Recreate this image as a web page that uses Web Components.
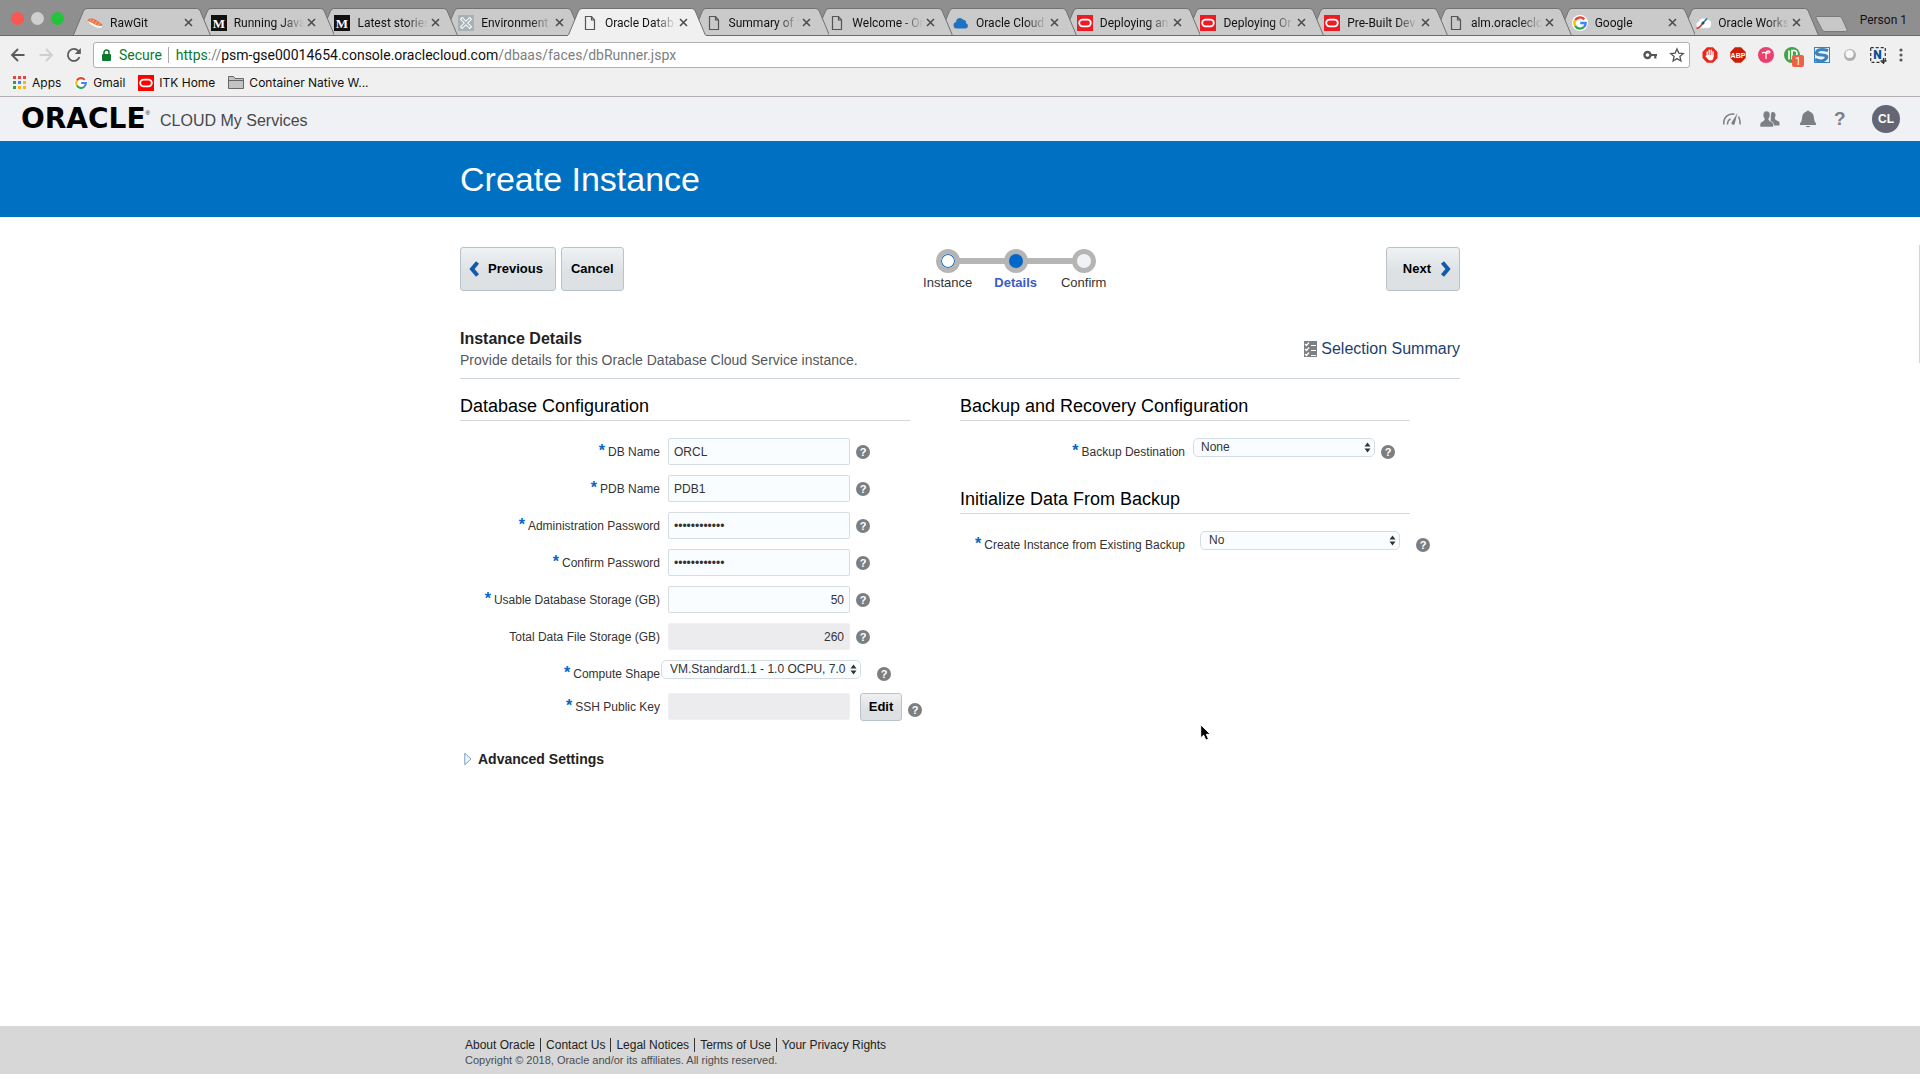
<!DOCTYPE html>
<html lang="en">
<head>
<meta charset="utf-8">
<title>Oracle Database Cloud Service</title>
<style>
  html, body { margin: 0; height: 100%; }
  body { background: #fff; font: 12px/16px "Liberation Sans", Arial, sans-serif; color: #333; }
</style>
</head>
<body>
<cloud-app></cloud-app>
<script>
const define = (name, render) => customElements.define(name, class extends HTMLElement {
  connectedCallback() {
    if (this.shadowRoot) return;
    const t = document.createElement('template');
    t.innerHTML = render(this);
    this.attachShadow({ mode: 'open' }).append(t.content.cloneNode(true));
  }
});
const svg = (w, h, body) => `<svg width="${w}" height="${h}" viewBox="0 0 ${w} ${h}" aria-hidden="true">${body}</svg>`;

const oracleMark = bg => svg(16, 16, `<rect width="16" height="16" fill="${bg}"/><rect x="2.2" y="4.7" width="11.6" height="6.6" rx="3.3" fill="none" stroke="#fff" stroke-width="1.8"/>`);
const googleMark = svg(16, 16, `<circle cx="8" cy="8" r="8" fill="#fff"/><g fill="none" stroke-width="2.4"><path d="M12.3 4.4A5.6 5.6 0 0 0 3.2 5.2" stroke="#ea4335"/><path d="M3.2 5.2a5.6 5.6 0 0 0 0 5.6" stroke="#fbbc05"/><path d="M3.2 10.8a5.6 5.6 0 0 0 8.6 1.4" stroke="#34a853"/><path d="M11.8 12.2A5.6 5.6 0 0 0 13.6 8H8.2" stroke="#4285f4"/></g>`);
const icons = {
  sushi: svg(16, 16, '<path d="M1 6.500l3 3 6 3.300 4.500-.3.6-1.800-5-2z" fill="#fff"/><path d="M.3 5.500C2 2.800 6 3 9.500 5.300c2.600 1.600 5 3.200 6.300 5.300-2.800.9-5.600.2-8.300-1.300C5 7.900 2.500 6.300.3 5.500z" fill="#f2703d"/><path d="M4 4.500l-1 1.800M7 4.800L5.500 7.500M10 6.500L8.300 9M12.500 8.200l-1.300 2" stroke="#ffc3a3" stroke-width=".8"/>'),
  medium: svg(16, 16, '<rect width="16" height="16" fill="#111"/><text x="8" y="12.500" text-anchor="middle" font-family="Liberation Serif, serif" font-weight="700" font-size="13" fill="#fff">M</text>'),
  env: svg(16, 16, '<rect width="16" height="16" fill="#a7b0b5"/><path d="M3 3l10 10M13 3L3 13" stroke="#fff" stroke-width="3.400"/><path d="M3.800 3.800l8.400 8.400M12.200 3.800l-8.400 8.400" stroke="#a7b0b5" stroke-width="1.600"/>'),
  page: svg(16, 16, '<path d="M3.500 1.500h6l3 3.500v9.500h-9z" fill="none" stroke="#555" stroke-width="1.200"/><path d="M9.500 1.500V5h3" fill="none" stroke="#555" stroke-width="1.200"/>'),
  cloud: svg(16, 16, '<path d="M3.500 13.500a3.300 3.300 0 0 1-.4-6.500 3.800 3.800 0 0 1 7-2.200 3.300 3.300 0 0 1 3 3.500 2.700 2.700 0 0 1-.3 5.200z" fill="#1f72bf"/>'),
  red: oracleMark('#ed1c24'),
  google: googleMark,
  work: svg(16, 16, '<path d="M4 13a3.200 3.200 0 0 1 0-6.300A4.300 4.300 0 0 1 11.500 5 3.800 3.800 0 0 1 13.500 13z" fill="#fff" stroke="#d8e2ea" stroke-width=".6"/><path d="M1.500 13.500C4.500 13 6 11 7.500 8.500" fill="none" stroke="#d93a30" stroke-width="1.500"/><path d="M7 9l5-5.500" stroke="#2d6fa8" stroke-width="1.500"/><circle cx="8" cy="8" r="1.500" fill="#1d4f80"/>')
};

define('browser-tab', el => `
<style>
  :host { position: relative; flex: 1 1 0; min-width: 0; height: 28px; display: flex; align-items: center; box-sizing: border-box; padding: 1px 18px 0 14px; font: 12px/16px Roboto, sans-serif; color: #111; }
  :host(:not(:first-child)) { margin-left: -14px; }
  :host([active]) { z-index: 30 !important; --tab: #f0f0f0; --base: #f0f0f0; }
  .shape { position: absolute; inset: 0; width: 100%; height: 100%; z-index: -1; }
  svg { flex: none; display: block; }
  .title { flex: 1; min-width: 0; margin: 0 3px 0 7px; overflow: hidden; white-space: nowrap; -webkit-mask-image: linear-gradient(to right, #000 calc(100% - 22px), transparent); mask-image: linear-gradient(to right, #000 calc(100% - 22px), transparent); }
  button { border: 0; background: none; padding: 0; width: 9px; height: 16px; display: grid; place-items: center; }
</style>
<svg class="shape" viewBox="0 0 138 28" preserveAspectRatio="none" aria-hidden="true"><path d="M0 28L10.500 3Q11.500.5 14 .5H124Q126.500.5 127.500 3L138 28" fill="var(--tab, #cacaca)" stroke="#707070"/><path d="M0 27.500H138" stroke="var(--base, #6a6a6a)"/></svg>
${icons[el.getAttribute('icon')]}
<span class="title"><slot></slot></span>
<button aria-label="Close tab">${svg(9, 9, '<path d="M1 1l7 7M8 1L1 8" stroke="#4a4a4a" stroke-width="1.500"/>')}</button>`);

define('tab-strip', () => {
  const tabs = [['sushi', 'RawGit'], ['medium', 'Running Java'], ['medium', 'Latest stories'], ['env', 'Environment'], ['page', 'Oracle Datab'], ['page', 'Summary of t'], ['page', 'Welcome - Or'], ['cloud', 'Oracle Cloud'], ['red', 'Deploying an'], ['red', 'Deploying Or'], ['red', 'Pre-Built Dev'], ['page', 'alm.oracleclo'], ['google', 'Google'], ['work', 'Oracle Works']];
  return `
<style>
  :host { display: flex; align-items: flex-end; height: 36px; background: #8f8f8f; box-shadow: inset 0 -1px #6a6a6a; font: 12px/16px Roboto, sans-serif; color: #111; }
  .lights { width: 73px; height: 36px; flex: none; box-sizing: border-box; padding: 12px 0 0 11px; display: flex; gap: 7px; }
  .lights i { width: 13px; height: 13px; border-radius: 50%; }
  .tabs { flex: 1; min-width: 0; display: flex; isolation: isolate; }
  .end { flex: none; width: 101px; height: 36px; display: flex; align-items: flex-start; box-sizing: border-box; padding-right: 13px; }
  button { border: 0; background: none; padding: 0; height: 36px; margin-left: -4px; flex: none; }
  .who { margin: 12px 0 0 auto; }
  svg { display: block; }
</style>
<div class="lights"><i style="background:#fc5650"></i><i style="background:#cfcfcf"></i><i style="background:#20c53a"></i></div>
<div class="tabs">${tabs.map(([i, t], n) => `<browser-tab icon="${i}" ${n === 4 ? 'active' : ''} style="z-index:${20 - n}">${t}</browser-tab>`).join('')}</div>
<div class="end"><button aria-label="New tab">${svg(34, 36, '<path d="M2 16.500h22q2 0 3 2l5 11q.5 2-1.500 2H10q-2 0-3-2L1 18q-.5-1.500 1-1.500z" fill="#c8c8c8" stroke="#7a7a7a"/>')}</button><span class="who">Person 1</span></div>`;
});

define('address-bar', () => `
<style>
  :host { display: flex; align-items: center; height: 38px; padding: 0 14px 0 10px; background: #f0f0f0; }
  button { border: 0; background: none; padding: 0; display: grid; place-items: center; }
  .nav { display: flex; gap: 12px; width: 83px; flex: none; }
  .nav button { width: 16px; height: 16px; }
  .box { flex: 1; min-width: 0; height: 26px; box-sizing: border-box; border: 1px solid #b1afb1; border-radius: 3px; background: #fff; display: flex; align-items: center; padding: 0 2px 0 8px; font: 14px/20px Roboto, sans-serif; color: #808080; }
  .secure { color: #0b7a2f; padding: 0 6px 0 8px; border-right: 1px solid #aaa; line-height: 16px; margin-right: 7px; }
  .url { flex: 1; white-space: nowrap; } .url b { font-weight: 400; color: #111; } .url i { font-style: normal; color: #0b7a2f; }
  .box button { width: 20px; margin-left: 7px; }
  .ext { display: flex; align-items: center; gap: 8px; margin-left: 10px; }
  .ext button { width: 20px; height: 20px; }
  .ext button:last-child { width: 10px; }
  svg { display: block; overflow: visible; }
</style>
<div class="nav">
  <button aria-label="Back">${svg(16, 16, '<path d="M14.500 8H2M8 2L2 8l6 6" fill="none" stroke="#5a5a5a" stroke-width="1.800"/>')}</button>
  <button aria-label="Forward">${svg(16, 16, '<path d="M1.500 8H14M8 2l6 6-6 6" fill="none" stroke="#cfcfcf" stroke-width="1.800"/>')}</button>
  <button aria-label="Reload">${svg(16, 16, '<path d="M13.500 10A6 6 0 1 1 12.300 3.900L14 5.600" fill="none" stroke="#5a5a5a" stroke-width="1.800"/><path d="M14.800 1v6h-6z" fill="#5a5a5a"/>')}</button>
</div>
<div class="box">${svg(9, 13, '<rect y="5" width="9" height="7" rx="1" fill="#0b7a2f"/><path d="M2 6V3.500a2.500 2.500 0 0 1 5 0V6" fill="none" stroke="#0b7a2f" stroke-width="1.500"/>')}
  <span class="secure">Secure</span><span class="url"><i>https</i>://<b>psm-gse00014654.console.oraclecloud.com</b>/dbaas/faces/dbRunner.jspx</span>
  <button aria-label="Saved password">${svg(15, 10, '<circle cx="4.500" cy="5" r="3" fill="none" stroke="#555" stroke-width="2.400"/><path d="M7.500 5H14M12.300 5v3.500" fill="none" stroke="#555" stroke-width="2.200"/>')}</button>
  <button aria-label="Bookmark this page">${svg(14, 14, '<path d="M7 .9l1.800 4.200 4.500.4-3.400 3 1 4.500L7 10.600 3.100 13l1-4.500-3.400-3 4.500-.4z" fill="none" stroke="#555" stroke-width="1.300"/>')}</button>
</div>
<div class="ext">
  <button aria-label="Content blocker">${svg(16, 16, '<path d="M5 .3h6L15.500 5v6L11 15.700H5L.5 11V5z" fill="#e8281b"/><path d="M5.200 9V5M7.200 8V3.200M9.200 8V3.200M11 9V4.700" stroke="#fff" stroke-width="1.300" stroke-linecap="round"/><path d="M4.600 8h7v2q-.5 3.500-3.200 3.500-2 0-3-2L3.200 9l1-.5z" fill="#fff"/>')}</button>
  <button aria-label="Adblock Plus">${svg(16, 16, '<path d="M5 .3h6L15.700 5v6L11 15.700H5L.3 11V5z" fill="#cc1d06"/><text x="8" y="10.700" text-anchor="middle" font-family="Liberation Sans, sans-serif" font-weight="700" font-size="7" fill="#fff">ABP</text>')}</button>
  <button aria-label="Extension">${svg(16, 16, '<circle cx="8" cy="8" r="8" fill="#ec3f6e"/><path d="M4 6.300q1.800-1.600 4-.3v6M8 6q.5-2 2.300-2t1.500 1.500Q10.600 6.500 8 6z" fill="none" stroke="#fff" stroke-width="1.300"/>')}</button>
  <button aria-label="Privacy extension, 1 alert">${svg(20, 20, '<circle cx="8" cy="10" r="8" fill="#42a34c"/><path d="M5 5.500v9M8 14.500v-9h2a3 3 0 0 1 0 6" fill="none" stroke="#fff" stroke-width="1.600"/><rect x="8" y="10" width="12" height="12" rx="2" fill="#ef6246"/><text x="14" y="19.500" text-anchor="middle" font-family="Roboto, sans-serif" font-size="10" fill="#fff">1</text>')}</button>
  <button aria-label="Script extension">${svg(16, 16, '<rect x=".5" y=".5" width="15" height="15" fill="#eaf3fa" stroke="#3b83be"/><path d="M14 3.500Q5 1 3 4.500T8 8t3.500 4T1 12.500" fill="none" stroke="#3b83be" stroke-width="3.200"/>')}</button>
  <button aria-label="Recorder">${svg(14, 14, '<circle cx="7" cy="7" r="6" fill="#b0b0b0"/><circle cx="6.500" cy="6" r="4" fill="#f7f7f7"/>')}</button>
  <button aria-label="Capture">${svg(16, 16, '<rect x=".7" y=".7" width="14.600" height="14.600" fill="none" stroke="#333" stroke-width="1.200" stroke-dasharray="3 2"/><text x="7.500" y="12.300" text-anchor="middle" font-family="Roboto, sans-serif" font-weight="900" font-size="12" fill="#0a4d9b">N</text><path d="M13.500 11v6M10.500 14h6" stroke="#333" stroke-width="1.300"/>')}</button>
  <button aria-label="Menu">${svg(4, 14, '<g fill="#5a5a5a"><circle cx="2" cy="2" r="1.600"/><circle cx="2" cy="7" r="1.600"/><circle cx="2" cy="12" r="1.600"/></g>')}</button>
</div>`);

define('bookmark-bar', () => {
  const cols = ['#e8453c', '#e8453c', '#e8453c', '#2d9f48', '#3f83f0', '#f5b915', '#2d9f48', '#f5b915', '#f5b915'];
  const grid = cols.map((c, i) => `<rect x="${(i % 3) * 5}" y="${Math.floor(i / 3) * 5}" width="3" height="3" fill="${c}"/>`).join('');
  return `
<style>
  :host { box-sizing: border-box; display: flex; align-items: center; gap: 13px; height: 23px; padding: 0 13px 5px; border-bottom: 1px solid #b1adb1; background: #f0f0f0; }
  a { display: flex; align-items: center; gap: 5px; color: #111; text-decoration: none; font: 12px/16px Inter, sans-serif; }
  svg { display: block; }
</style>
<a href="#apps">${svg(14, 13, grid)}Apps</a>
<a href="#gmail">${googleMark.replace('width="16" height="16"', 'width="14" height="14"')}Gmail</a>
<a href="#itk">${oracleMark('#fe0000')}ITK Home</a>
<a href="#folder">${svg(16, 13, '<path d="M.5 12.500V.5h5l1.500 2h8.500v10z" fill="#c3c3c3" stroke="#666"/><path d="M.5 4.500h15" stroke="#666"/>')}Container Native W...</a>`;
});

define('service-header', () => `
<style>
  :host { display: flex; align-items: center; height: 44px; padding: 0 20px 0 21px; background: #f0f1f4; }
  .logo { width: 139px; font: 700 28px/30px "DejaVu Sans", sans-serif; color: #000; display: flex; }
  .logo small { font: 6px/10px "Liberation Sans", sans-serif; padding-top: 4px; }
  .name { font-size: 16px; line-height: 20px; color: #46484c; padding-top: 3px; }
  nav { margin-left: auto; display: flex; align-items: center; gap: 18px; }
  button { border: 0; padding: 0; background: none; width: 20px; height: 20px; display: grid; place-items: center; }
  .help { width: 10px; margin-left: -2px; font: 700 19px/20px "Liberation Sans", sans-serif; color: #7c7f83; }
  .user { width: 28px; height: 28px; border-radius: 50%; background: #646673; color: #fff; font: 700 12px/28px "Liberation Sans", sans-serif; margin-left: 10px; }
  svg { display: block; }
</style>
<span class="logo">ORACLE<small>®</small></span><span class="name">CLOUD My Services</span>
<nav>
  <button aria-label="Dashboard">${svg(18, 14, '<path d="M1 12.500A8.500 8.500 0 0 1 11.500 2.300M15.500 4.500q1.700 3 1.600 8M4.500 12.500q-.2-4 3-5.700" fill="none" stroke="#7c7f83" stroke-width="1.500"/><path d="M8.500 10.500L14.500 1l-3 11.500q-3.500 1-3-2z" fill="#7c7f83"/>')}</button>
  <button aria-label="Users">${svg(20, 16, '<g fill="#7c7f83"><path d="M11.500 1.200q3.300-1 4 2 .2 2-.8 3.800.3 2 2.500 2.800 2.300.5 2.300 2.200v2.500h-5.500q-.2-2.800-3.600-4 .7-3 .3-5.500z"/><path d="M6.500 0q3.800 0 3.500 4.500-.3 2.300-1.300 3.300 0 1.700 1.300 2.200 3.300 1 3.500 3v3H0v-3q.2-2 3.200-3 1.300-.6 1.200-2.200-1.200-1.300-1.300-3.300Q3 .2 6.500 0z" stroke="#f0f1f4" stroke-width=".6"/></g>')}</button>
  <button aria-label="Notifications">${svg(18, 18, '<path d="M7.500 1.500q1.500-2 3 0 4.500 1.500 4.500 7 0 3 2 5v1.500H1v-1.500q2-2 2-5 0-5.500 4.500-7zM6.500 16h5q-2.500 2.500-5 0z" fill="#7c7f83"/>')}</button>
  <button class="help" aria-label="Help">?</button>
  <button class="user">CL</button>
</nav>`);

const buttonCss = 'button { box-sizing: border-box; border: 1px solid #b9c3cb; border-radius: 3px; background: linear-gradient(#eff1f3, #dde1e4 60%); color: #000; font: 700 13px/16px "Liberation Sans", Arial, sans-serif; }';

define('wizard-button', el => {
  const d = el.getAttribute('arrow');
  const arrow = d ? svg(11, 16, `<path d="${d === 'left' ? 'M8.500 1.500L3 8l5.500 6.500' : 'M2.500 1.500L8 8l-5.500 6.500'}" fill="none" stroke="#125aac" stroke-width="4"/>`) : '';
  return `
<style>
  :host { display: block; } ${buttonCss}
  button { height: 44px; padding: 0 ${d ? 8 : 9}px; display: flex; align-items: center; gap: 8px; }
  ${d === 'left' ? 'button { padding-right: 12px; }' : d ? 'button { padding-left: 16px; gap: 9px; }' : ''}
  svg { display: block; }
</style>
<button>${d === 'left' ? arrow : ''}<slot></slot>${d === 'right' ? arrow : ''}</button>`;
});

define('progress-train', () => `
<style>
  :host { display: block; padding-left: 22px; }
  ol { display: flex; list-style: none; margin: 0; padding: 0; }
  li { width: 68px; display: grid; justify-items: center; font-size: 13px; line-height: 20px; color: #333; background: linear-gradient(#b5b5b5, #b5b5b5) 0 9px / 100% 6px no-repeat; }
  li:first-child { background-size: 50% 6px; background-position: 100% 9px; }
  li:last-child { background-size: 50% 6px; }
  i { box-sizing: border-box; width: 24px; height: 24px; border-radius: 50%; border: 5px solid #b5b5b5; background: #fff; box-shadow: inset 0 0 0 1px #0a66c2; }
  .on i { background: #0067cc; } .on { font-weight: 700; color: #3c5cc4; }
  li:last-child i { background: #eff3f5; box-shadow: none; }
</style>
<ol><li><i></i>Instance</li><li class="on" aria-current="step"><i></i>Details</li><li><i></i>Confirm</li></ol>`);

define('help-icon', () => `
<style>:host { display: block; flex: none; } button { display: block; border: 0; padding: 0; width: 14px; height: 14px; border-radius: 50%; background: #7c7f82; color: #fff; font: 700 11px/14px "Liberation Sans", sans-serif; text-align: center; }</style>
<button aria-label="Help">?</button>`);

define('form-field', el => {
  const a = n => el.getAttribute(n), has = n => el.hasAttribute(n);
  const control = a('type') === 'select'
    ? `<span class="pick"><select id="c"><option>${a('value')}</option></select>${svg(7, 11, '<path d="M.5 4.500L3.500.5l3 4zM.5 6.500l3 4 3-4z" fill="#333"/>')}</span>`
    : `<input id="c" type="${a('type') || 'text'}" value="${a('value') || ''}" ${has('readonly') ? 'readonly' : ''} autocomplete="off">`;
  return `
<style>
  :host { display: flex; align-items: flex-start; height: 27px; } ${buttonCss}
  label { width: var(--label, 200px); flex: none; text-align: right; line-height: 28px; color: #333; white-space: nowrap; }
  label b { font-size: 16px; line-height: 20px; color: #0567c9; margin-right: 3px; }
  input, select { box-sizing: border-box; width: 182px; height: 27px; margin: 0 0 0 8px; border: 1px solid #d6dde2; border-radius: 2px; background: #fafdff; padding: 0 5px; font: 12px/16px "Liberation Sans", Arial, sans-serif; color: #333; outline: 0; }
  :host([number]) input { text-align: right; }
  input[readonly] { background: #ececee; border-color: #f0f0f2; }
  select { appearance: none; height: 19px; border-radius: 5px; padding: 0 20px 2px 7px; line-height: 16px; display: block; }
  .pick { position: relative; } .pick svg { position: absolute; right: 4px; top: 4px; }
  help-icon { margin: 7px 0 0 6px; }
  :host([wide]) select { width: 200px; margin-left: var(--inset, 15px); padding-right: 4px; padding-left: 8px; } :host([wide]) help-icon { margin-left: 16px; }
  :host([action]) button { height: 28px; width: 42px; padding: 0; margin-left: 10px; } :host([action]) help-icon { margin-top: 10px; }
</style>
<label for="c">${has('required') ? '<b>*</b>' : ''}${a('label')}</label>${control}${has('action') ? `<button>${a('action')}</button>` : ''}<help-icon></help-icon>`;
});

define('form-section', el => `
<style>
  :host { display: block; }
  h2 { margin: 0 0 17px; height: 28px; border-bottom: 1px solid #d3d7de; font-size: 18px; line-height: 28px; font-weight: 400; color: #000; }
  .rows { display: grid; gap: 10px; }
</style>
<h2>${el.getAttribute('heading')}</h2><div class="rows"><slot></slot></div>`);

define('instance-form', () => `
<style>
  :host { display: grid; grid-template-columns: 450px 450px; column-gap: 50px; padding-top: 13px; }
  .right { --label: 225px; display: grid; grid-template-columns: minmax(0, 1fr); align-content: start; gap: 20px; }
  .shape { --inset: 1px; height: 23px; }
  details { margin-top: 30px; font: 700 14px/18px "Liberation Sans", Arial, sans-serif; color: #222; }
  summary { list-style: none; display: flex; align-items: center; gap: 6px; padding-left: 4px; }
  svg { display: block; }
</style>
<div>
  <form-section heading="Database Configuration">
    <form-field required label="DB Name" value="ORCL"></form-field>
    <form-field required label="PDB Name" value="PDB1"></form-field>
    <form-field required label="Administration Password" type="password" value="Welcome_1234"></form-field>
    <form-field required label="Confirm Password" type="password" value="Welcome_1234"></form-field>
    <form-field required number label="Usable Database Storage (GB)" value="50"></form-field>
    <form-field number readonly label="Total Data File Storage (GB)" value="260"></form-field>
    <form-field class="shape" required wide type="select" label="Compute Shape" value="VM.Standard1.1 - 1.0 OCPU, 7.0"></form-field>
    <form-field required readonly label="SSH Public Key" action="Edit"></form-field>
  </form-section>
  <details><summary>${svg(8, 14, '<path d="M.8 1.200L7 7 .8 12.800z" fill="#eef5fb" stroke="#7c9fc4"/>')}Advanced Settings</summary></details>
</div>
<div class="right">
  <form-section heading="Backup and Recovery Configuration"><form-field required type="select" label="Backup Destination" value="None"></form-field></form-section>
  <form-section heading="Initialize Data From Backup"><form-field required wide type="select" label="Create Instance from Existing Backup" value="No"></form-field></form-section>
</div>`);

define('page-footer', () => `
<style>
  :host { display: block; background: #d7d7d7; box-sizing: border-box; height: 48px; padding-top: 11px; }
  .in { width: 1000px; max-width: 100%; margin: 0 auto; box-sizing: border-box; padding-left: 5px; }
  nav { display: flex; line-height: 16px; }
  a { color: #222; text-decoration: none; line-height: 14px; margin: 1px 0; }
  a + a { border-left: 1px solid #333; margin-left: 5px; padding-left: 5px; }
  p { margin: 0; font-size: 11px; line-height: 14px; color: #4c4c4c; }
</style>
<div class="in"><nav><a href="#about">About Oracle</a><a href="#contact">Contact Us</a><a href="#legal">Legal Notices</a><a href="#terms">Terms of Use</a><a href="#privacy">Your Privacy Rights</a></nav>
<p>Copyright © 2018, Oracle and/or its affiliates. All rights reserved.</p></div>`);

define('cloud-app', () => `
<style>
  :host { position: relative; display: flex; flex-direction: column; min-height: 100vh; box-sizing: border-box; padding-bottom: 6px; }
  .banner { background: #0071c2; }
  .in { width: 1000px; max-width: 100%; margin: 0 auto; }
  h1 { margin: 0; font-size: 34px; line-height: 76px; font-weight: 400; color: #fff; }
  main { flex: 1; }
  .wizard { display: flex; justify-content: space-between; align-items: flex-start; padding-top: 30px; }
  .wizard > div { display: flex; gap: 5px; }
  progress-train { margin-top: 2px; }
  .intro { display: flex; justify-content: space-between; align-items: center; height: 49px; margin-top: 36px; border-bottom: 1px solid #cfd6dc; }
  h2 { margin: 0; font-size: 16px; line-height: 20px; color: #222; }
  p { margin: 0; font-size: 14px; line-height: 22px; color: #55585c; }
  .intro > div { height: 49px; }
  a { display: flex; align-items: center; gap: 4px; font-size: 16px; line-height: 20px; color: #1d3f70; text-decoration: none; margin-bottom: 9px; }
  .cursor { position: absolute; left: 1200px; top: 724px; }
  .thumb { position: absolute; right: 0; top: 245px; width: 1px; height: 118px; background: #d4d4d4; }
  svg { display: block; }
</style>
<tab-strip></tab-strip><address-bar></address-bar><bookmark-bar></bookmark-bar>
<service-header></service-header>
<div class="banner"><div class="in"><h1>Create Instance</h1></div></div>
<main><div class="in">
  <div class="wizard"><div><wizard-button arrow="left">Previous</wizard-button><wizard-button>Cancel</wizard-button></div><progress-train></progress-train><wizard-button arrow="right">Next</wizard-button></div>
  <div class="intro"><div><h2>Instance Details</h2><p>Provide details for this Oracle Database Cloud Service instance.</p></div>
  <a href="#summary">${svg(13, 16, '<rect width="13" height="16" fill="#7d8184"/><path d="M1 3l1.500 1.500L5 1.500M1 8l1.500 1.500L5 6.500M1 13l1.500 1.500L5 11.500M7 4.500h5M7 9.500h5M7 14.500h5" fill="none" stroke="#fff" stroke-width="1.200"/>')}Selection Summary</a></div>
  <instance-form></instance-form>
</div></main>
<page-footer></page-footer>
<div class="thumb"></div>
<div class="cursor">${svg(12, 18, '<path d="M.7.800v13l3-2.600 2.200 5 2.600-1.200-2.200-4.700h4.200z" fill="#000" stroke="#fff"/>')}</div>`);
</script>
</body>
</html>
